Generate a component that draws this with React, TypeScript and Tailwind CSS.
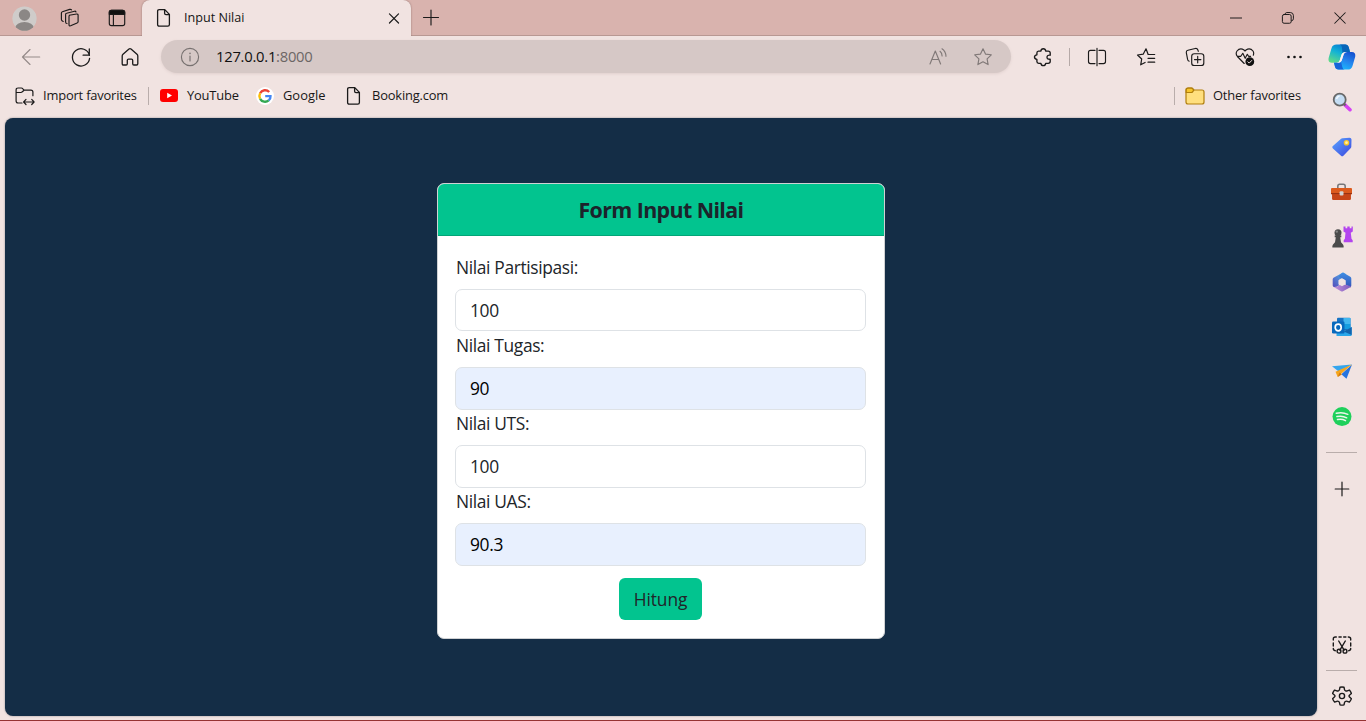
import type { ReactNode } from 'react';

type IconProps = { children: ReactNode; className?: string; color?: string; sw?: number };

function Line({ children, className = 'size-5', color = '#1b1a1a', sw = 1.15 }: IconProps) {
  return (
    <svg viewBox="0 0 20 20" className={`shrink-0 ${className}`} fill="none" stroke={color} strokeWidth={sw} strokeLinecap="round" strokeLinejoin="round">
      {children}
    </svg>
  );
}

function Cell({ children, className = 'w-[49px]' }: { children: ReactNode; className?: string }) {
  return <div className={`flex shrink-0 items-center justify-center ${className}`}>{children}</div>;
}

const PageIcon = () => (
  <Line sw={1.3}>
    <path d="M5.2 1.6h5.6l4.6 4.8v10.2q0 1.6-1.6 1.6H5.2q-1.6 0-1.6-1.6V3.2q0-1.6 1.6-1.6zM10.6 1.8v3.4q0 1.4 1.4 1.4h3.2" />
  </Line>
);

const STAR = 'M10 1.8l2.5 5.3 5.8.7-4.2 4 1 5.8-5.1-2.8-5.1 2.8 1-5.8-4.2-4 5.8-.7z';

function TitleBar() {
  return (
    <header className="flex h-9 shrink-0 items-stretch bg-[#d9b3ae] shadow-[inset_0_-1px_0_#b89893]">
      <div className="flex w-[142px] items-center pl-3">
        <svg viewBox="0 0 25 25" className="size-[25px]">
          <defs><clipPath id="avatar"><circle cx="12.5" cy="12.5" r="12.3" /></clipPath></defs>
          <g clipPath="url(#avatar)">
            <circle cx="12.5" cy="12.5" r="12.3" fill="#cfccca" />
            <circle cx="12.5" cy="9" r="5.7" fill="#8b8785" />
            <ellipse cx="12.5" cy="22" rx="9.3" ry="5.9" fill="#8b8785" />
          </g>
        </svg>
        <Cell className="ml-[8px] w-[49px]">
          <Line>
            <path d="M9.5 6.8l7.4-1.3q1.4-.2 1.5 1.2v7q0 1-1 1.3l-6.5 2.9q-1.5.5-1.6-1V8.2q0-1.1 1-1.4z" transform="translate(-.3 .8) scale(1 .95)" />
            <path d="M7 15.5q-1.4 0-1.4-1.5V6.6q0-1.1 1-1.3l8-2.1q1-.2 1.4.8" />
            <path d="M3.2 13.5Q1.4 13 1.4 11.6V5q0-1 1-1.3l7.3-2.3q1.2-.3 1.8.5" />
          </Line>
        </Cell>
        <Cell className="w-[45px]">
          <Line>
            <rect x="2.3" y="2.3" width="15.4" height="15.4" rx="2.2" />
            <path d="M2.3 6.3V4.5q0-2.2 2.2-2.2h11q2.2 0 2.2 2.2v1.8z" fill="#111" />
            <path d="M6.4 6.5v11" />
          </Line>
        </Cell>
      </div>
      <div className="flex w-[269px] items-center rounded-t-lg bg-[#f1e3e1] pl-3 pr-[10px] shadow-[0_0_2px_#8f6f6b] [clip-path:inset(0_-3px_0_-3px)]">
        <PageIcon />
        <span className="ml-[10px] text-[12.6px] text-[#151515]">Input Nilai</span>
        <Line className="ml-auto size-[14px]" sw={1.7}><path d="M3.5 4.2l13 13M16.500 4.200l-13 13" /></Line>
      </div>
      <Cell className="w-[40px]"><Line><path d="M10 2v15M2.500 9.500h15" /></Line></Cell>
      <div className="ml-auto flex">
        <Cell className="w-[52px]"><Line className="size-[14px]" sw={1.4}><path d="M2 10h16" /></Line></Cell>
        <Cell className="w-[51px]">
          <Line className="size-[14px]" sw={1.4}><rect x="2" y="5" width="12.500" height="12.500" rx="2.400" /><path d="M5.500 4.600q.4-2.200 2.800-2.400h5.200q4 .2 4.200 4v5q-.2 2.600-2.600 3" /></Line>
        </Cell>
        <Cell className="w-[53px]"><Line className="size-[14px]" sw={1.5}><path d="M2.500 2.500l15 15M17.500 2.500l-15 15" /></Line></Cell>
      </div>
    </header>
  );
}

function Toolbar() {
  return (
    <div className="flex h-[41px] shrink-0 items-center pl-1.5">
      <Cell><Line color="#958b89"><path d="M18.7 10H1.5M9 2.5L1.5 10 9 17.5" /></Line></Cell>
      <Cell className="w-[51px]"><Line sw={1.3}><path d="M18.4 8.3a8.6 8.6 0 1 0 .2 3M18.3 2v6.2h-6.2" /></Line></Cell>
      <Cell className="w-[48px]">
        <Line sw={1.3}><path d="M2.2 9q0-1 .8-1.7l6-5.2q1-.9 2 0l6 5.2q.8.7.8 1.700v7.700q0 1.300-1.300 1.300h-2.600q-1.200 0-1.200-1.300v-3.400q0-1.200-1.200-1.200h-3q-1.200 0-1.200 1.200v3.400q0 1.300-1.200 1.300H3.500q-1.300 0-1.300-1.300z" /></Line>
      </Cell>
      <div className="ml-[7px] flex h-[33px] w-[850px] items-center rounded-full bg-[#d6c8c6] pl-[19px] pr-[18px] shadow-[0_1px_3px_#e0d0ce]">
        <Line color="#777170"><circle cx="10" cy="10" r="8.600" /><path d="M10 9v5" /><path d="M10 6.200v.2" strokeWidth="1.500" /></Line>
        <span className="ml-[16px] text-[14.8px] tracking-[-0.26px] text-[#6c6665]"><span className="text-[#0f0f0f]">127.0.0.1</span>:8000</span>
        <Line className="ml-auto size-5" color="#817978"><path d="M2 17L7.300 4 12.600 17M3.900 12.500h6.800M12 4.300q2 1.600 2.100 4.700M14 1.800q3.700 2.500 4 7.500" /></Line>
        <Line className="ml-[25px] size-5" color="#817978"><path d={STAR} /></Line>
      </div>
      <Cell className="ml-2 w-[48px]">
        <Line sw={1.35}><path d="M5.500 4.100h2.300q.3-2.400 2.500-2.400t2.500 2.400h2.400q2 0 2 2v2.100q-3.200-.3-3.200 2t3.200 2v2.300q0 1.800-2 1.800h-2.500q-.3 2.300-2.400 2.300t-2.400-2.300H5.700q-1.800 0-1.800-1.800v-2.100q-2.400-.3-2.400-2.300t2.400-2.300V6q0-1.900 1.600-1.900z" /></Line>
      </Cell>
      <div className="ml-[2px] mr-[2px] h-[18px] w-px bg-[#b5a9a7]" />
      <Cell>
        <Line><path d="M8 3.4H3.500q-2 0-2 2v9.200q0 2 2 2H8M12 3.400h4.500q2 0 2 2v9.200q0 2-2 2H12M10 1.300v17.400" /></Line>
      </Cell>
      <Cell>
        <Line sw={1.2}><path d="M12 7L10 1.800 7.200 7.200l-5.700.8 4.200 4-1 5.800 4.400-2.300M12 7.500h6.700M12 11.300h6.700M12 15.200h6.700" /></Line>
      </Cell>
      <Cell className="w-[50px]">
        <Line><rect x="6.700" y="6.700" width="12.100" height="11.800" rx="2.600" /><path d="M12.700 9.400v6.400M9.500 12.600h6.400M4.200 14.200q-1.300-.4-1.600-1.800L1.300 5.600q-.3-1.900 1.600-2.400l7.300-1.700q2-.4 2.700 1.500l.4 1.300" /></Line>
      </Cell>
      <Cell>
        <Line><path d="M9.200 16.500L2.400 9.500q-2.200-2.800-.4-5.500Q5 .4 9 3l1 1 1-1q4-2.600 7 1 1.200 2 .3 4.200M2.300 9.300h3.500l2-3 2.400 5 2.100-4 1.300 2h2" /><circle cx="14.800" cy="14.700" r="4.400" fill="#111" stroke="none" /><path d="M12.900 14.800l1.300 1.300 2.500-2.600" stroke="#f1e3e1" strokeWidth="1" /></Line>
      </Cell>
      <Cell><Line><g fill="#111" stroke="none"><circle cx="4.500" cy="10" r="1.300" /><circle cx="10.500" cy="10" r="1.300" /><circle cx="16.500" cy="10" r="1.300" /></g></Line></Cell>
    </div>
  );
}

function Bookmarks() {
  return (
    <div className="flex h-[37px] shrink-0 items-center pl-[15px] text-[12.9px] tracking-[-0.18px] text-[#181717]">
      <Line sw={1.2}>
        <path d="M7 17H3.100q-2 0-2-2V4q0-2 2-2h3.200q1 0 1.600.8l1.200 1.300h6.800q2 0 2 2v3.600M1.200 6.500h4.600q1 0 1.600-.8L9 4.200M9 16h9.500M11 13.400L8.600 16l2.400 2.500M16.700 13.400l2.400 2.600-2.400 2.500" />
      </Line>
      <span className="ml-2 w-[95px] whitespace-nowrap">Import favorites</span>
      <div className="ml-[10px] h-[18px] w-px bg-[#b9adab]" />
      <svg viewBox="0 0 18 13" className="ml-[11px] h-[13px] w-[18px]"><rect width="18" height="13" rx="3" fill="#f00" /><path d="M7.200 3.800v5.400L12 6.500z" fill="#fff" /></svg>
      <span className="ml-[9px] w-[53px] whitespace-nowrap">YouTube</span>
      <svg viewBox="0 0 18 18" className="ml-4 size-[18px]">
        <circle cx="9" cy="9" r="9" fill="#fff" />
        <g fill="none" strokeWidth="2.400">
          <path d="M13.200 5A5.600 5.600 0 0 0 4.100 6.300" stroke="#ea4335" />
          <path d="M4.100 6.300a5.800 5.800 0 0 0 0 5.500" stroke="#fbbc05" />
          <path d="M4.100 11.800a5.600 5.600 0 0 0 8.600 1.500" stroke="#34a853" />
          <path d="M12.700 13.300q2-1.700 1.800-4.200H9.200" stroke="#4285f4" />
        </g>
      </svg>
      <span className="ml-[9px] w-[44px] whitespace-nowrap tracking-normal">Google</span>
      <div className="ml-[17px]"><PageIcon /></div>
      <span className="ml-2 whitespace-nowrap">Booking.com</span>
      <div className="ml-auto h-[18px] w-px bg-[#b9adab]" />
      <svg viewBox="0 0 20 18" className="ml-[10px] h-[18px] w-5" stroke="#b17f0d" strokeWidth="1.200">
        <path d="M1 7V3q0-2 2-2h3.500q1 0 1.500.8L9 3h8q2 0 2 2v10q0 2-2 2H3q-2 0-2-2z" fill="#ffdf7e" />
        <path d="M1.200 5.500V3q0-1.800 2-1.800h3.200q1 0 1.400.7l.9 1.300L7.500 5q-.5.5-1.400.5z" fill="#f7c52c" />
      </svg>
      <span className="ml-2 w-[105px] whitespace-nowrap">Other favorites</span>
    </div>
  );
}

const fields = [
  { label: 'Nilai Partisipasi:', value: '100', filled: false },
  { label: 'Nilai Tugas:', value: '90', filled: true },
  { label: 'Nilai UTS:', value: '100', filled: false },
  { label: 'Nilai UAS:', value: '90.3', filled: true },
];

function GradeForm() {
  return (
    <form className="flex h-[456px] w-[448px] flex-col overflow-hidden rounded-[7px] border border-[#cfd1d3] bg-white text-[17.4px] tracking-[-0.36px] text-[#212529]" onSubmit={(e) => e.preventDefault()}>
      <h1 className="flex h-[52px] shrink-0 items-center justify-center border-b border-[#02a577] bg-[#02c48f] pt-[2px] text-[21.4px] font-bold tracking-[-0.6px] text-[#1c232b]">Form Input Nilai</h1>
      <div className="flex flex-col pl-[17px] pr-[18px] pt-[17.6px]">
        {fields.map((f) => (
          <label key={f.label} className="flex h-[78.1px] flex-col">
            <span className="h-[35.3px] pl-px leading-[26.4px]">{f.label}</span>
            <input
              defaultValue={f.value}
              className={`h-[42.6px] rounded-[7px] border border-[#dee2e6] px-3.5 outline-none ${f.filled ? 'bg-[#e8f0fe] text-black' : 'bg-white'}`}
            />
          </label>
        ))}
        <button className="mt-3 h-[42px] w-[83px] self-center rounded-[6px] bg-[#02c48f] pt-px tracking-[-0.1px]">Hitung</button>
      </div>
    </form>
  );
}

function Copilot() {
  return (
    <svg viewBox="0 0 28 26" className="h-[26px] w-7">
      <defs>
        <linearGradient id="cpA" x1=".7" y1="0" x2=".2" y2="1"><stop offset="0" stopColor="#0876d2" /><stop offset=".45" stopColor="#12b2d6" /><stop offset="1" stopColor="#62dc85" /></linearGradient>
        <linearGradient id="cpB" x1=".8" y1="0" x2=".3" y2="1"><stop offset="0" stopColor="#1450cf" /><stop offset=".5" stopColor="#2484ed" /><stop offset="1" stopColor="#1bbcff" /></linearGradient>
      </defs>
      <path d="M8.500.5h8.700q2.800 0 3.600 3L22 8h-5q-2.500 0-3.400 2.600L11.700 16.500q-.8 2.300-3.200 2.300H4q-4.400 0-3.300-5L3.500 4.200Q4.500.5 8.500.5z" fill="url(#cpA)" />
      <path d="M17.200.5q2.800 0 3.600 3L22 8h-4.500q-2 0-3 1.300L13.900 3q-.5-2.500-2.400-2.500z" fill="#0764b8" />
      <path d="M19.500 25.500h-9q-2.800 0-3.500-2.700l-1-4h4.500q2.400 0 3.200-2.300l2-6.300Q16.500 8 19 8h4.700q4.300 0 3.500 4.700l-2.700 9.200q-1 3.600-5 3.600z" fill="url(#cpB)" />
      <path d="M10.500 25.500q-2.800 0-3.500-2.700l-1-4h4.500q1.500 0 2.500-1.200l1.300 5.400q.6 2.500 2.400 2.500z" fill="#1665d8" />
      <path d="M19 8h-2q-2.500 0-3.400 2.600L11.700 16.500q-.8 2.300-3.200 2.300h2q2.400 0 3.200-2.300l2-6.300Q16.500 8 19 8z" fill="#fbf3f2" />
    </svg>
  );
}

function Sidebar() {
  return (
    <aside className="flex w-12 shrink-0 flex-col items-center pr-px">
      <Cell className="mt-[8px] h-[26px] w-[47px]"><Copilot /></Cell>
      <div className="mt-[9px] flex flex-col items-center">
        <Cell className="h-[45px] w-[47px]">
          <svg viewBox="0 0 20 20" className="size-5"><path d="M12 12l6 5.700" stroke="#d743f4" strokeWidth="3.600" strokeLinecap="round" /><path d="M11.500 11.500l2 2" stroke="#666" strokeWidth="2" /><circle cx="7.700" cy="7.700" r="6" fill="#c4ddf3" stroke="#686868" strokeWidth="1.800" /><path d="M4.500 7q.6-2.600 3-3" stroke="#f4faff" strokeWidth="1.500" fill="none" /></svg>
        </Cell>
        <Cell className="h-[45px] w-[47px]">
          <svg viewBox="0 0 20 20" className="size-5">
            <defs><linearGradient id="tag" x1="0" y1="0" x2="1" y2="1"><stop stopColor="#5ba6ff" /><stop offset="1" stopColor="#3c46dd" /></linearGradient></defs>
            <path d="M10.500 1.200L17.600.7q1.800 0 1.900 1.900l-.2 7.100q0 .9-.7 1.600l-7.200 7.400q-1.200 1.100-2.400 0L.9 11.500q-1.200-1.200 0-2.400l7.900-7.200q.7-.7 1.700-.7z" fill="url(#tag)" /><circle cx="14.500" cy="5.700" r="2.100" fill="#fff0a8" stroke="#f6c52b" strokeWidth="1.400" />
          </svg>
        </Cell>
        <Cell className="h-[45px] w-[47px] pt-[2px]">
          <svg viewBox="0 0 20 20" className="size-[21px]"><path d="M6.500 6V4q0-1.800 1.800-1.800h3.400q1.800 0 1.800 1.800v2" fill="none" stroke="#77777a" strokeWidth="1.500" /><rect y="5.700" width="20" height="6.200" rx="1" fill="#dc5a1d" /><path d="M1 11h18v5q0 1.200-1.200 1.200H2.200Q1 17.200 1 16z" fill="#c64518" /><path d="M0 11h20" stroke="#8a2b11" strokeWidth=".8" /><rect x="8.200" y="8.800" width="3.700" height="4" rx="1" fill="#d2d2d2" /></svg>
        </Cell>
        <Cell className="h-[45px] w-[47px]">
          <svg viewBox="0 0 22 22" className="size-[22px]"><path d="M12.500.5h2v1.700h1.800V.5h2.400v1.700h1.800V.5h1.300v5l-2 1.300.7 6 1.200 1.500v2h-9v-2l1.200-1.500.6-6-2-1.300z" fill="#b344ee" /><g fill="#4b4b4b"><circle cx="7" cy="6.700" r="3.500" /><path d="M3.700 9.500h6.600v1.700H9.200l.8 5 2 2.300q1 1.300.6 3H1.400q-.4-1.700.6-3l2-2.300.8-5H3.700z" /></g><circle cx="5.800" cy="5.600" r="1.200" fill="#858585" /></svg>
        </Cell>
        <Cell className="h-[45px] w-[47px]">
          <svg viewBox="0 0 20 20" className="size-5">
            <defs>
              <linearGradient id="mA" x1="0" y1="1" x2="1" y2="0"><stop stopColor="#554cba" /><stop offset="1" stopColor="#50bdf0" /></linearGradient>
              <linearGradient id="mB"><stop stopColor="#c896dc" /><stop offset="1" stopColor="#7d5abf" /></linearGradient>
              <linearGradient id="mC" x1="0" y1="0" x2="0" y2="1"><stop stopColor="#3f8ee4" /><stop offset="1" stopColor="#3454b8" /></linearGradient>
            </defs>
            <path d="M11 .4L1.500 5.700Q.7 6.200.7 7.200v6.300q0 1.500 1.700 1.600 2.500 0 4.500-1.500V8L14 4V2z" fill="url(#mA)" />
            <path d="M11 .4l7.300 4.300q1 .6 1 1.700v7.200q0 1.200-1 1.800l-4.800-3V8.500L7 5q0-3 4-4.600z" fill="url(#mC)" />
            <path d="M1.200 14.700q3.200.8 5.700-1.300l2.800-1.700 9.300 2.500q-.2.800-.7 1.100L11 19.300q-1 .6-2 0z" fill="url(#mB)" />
            <path d="M10 6.200l3.500 2v4L10 14.200l-3.500-2v-4z" fill="#f1e3e1" />
          </svg>
        </Cell>
        <Cell className="h-[45px] w-[47px]">
          <svg viewBox="0 0 20 20" className="size-5"><rect x="5" y=".8" width="13.500" height="13" rx="1" fill="#1673c4" /><path d="M11.500 1h7v6h-7z" fill="#42b7ef" /><path d="M12 7h6.500v5H12z" fill="#159de0" /><path d="M4.500 19V10l7.500 4.500L19.700 10v8q0 1-1 1z" fill="#29a7ea" /><path d="M19.700 10v8l-8-3.600z" fill="#1265ae" /><rect y="4.500" width="12.500" height="12" rx="1.200" fill="#0869bd" /><ellipse cx="6.200" cy="10.500" rx="3" ry="3.300" fill="none" stroke="#fff" strokeWidth="1.700" /></svg>
        </Cell>
        <Cell className="h-[45px] w-[47px]">
          <svg viewBox="0 0 20 20" className="size-5"><path d="M0 4.200L20 2.500 6.700 9.600z" fill="#35a5ed" /><path d="M20 2.500L14.500 16.800l-5.200-4.600z" fill="#2674df" /><path d="M20 2.500L3.500 9.800l2.200 5.200 3.500-3.200z" fill="#f6a51c" /><path d="M5.700 15l1.900-4.500 2.300 2z" fill="#d47a0c" /></svg>
        </Cell>
        <Cell className="h-[45px] w-[47px]">
          <svg viewBox="0 0 20 20" className="size-5"><circle cx="10" cy="9.600" r="9.500" fill="#1ed05b" /><path d="M4.300 6.300q6-1.700 11.500 1M4.900 9.600q5.300-1.300 9.800 1.200M5.500 12.600q4.300-1 8 1" fill="none" stroke="#eaf6ea" strokeWidth="1.500" strokeLinecap="round" /></svg>
        </Cell>
      </div>
      <div className="mt-[13px] h-px w-[31px] bg-[#b9adab]" />
      <Cell className="mt-[26px] h-5 w-[47px]"><Line className="size-4" sw={1.5}><path d="M10 1.500v17M1.500 10h17" /></Line></Cell>
      <Cell className="mt-auto h-5 w-[47px]">
        <Line sw={1.4}>
          <path d="M1.300 5V4q0-2 2-2h1M7 2h2.200M11.700 2h2.200M16.300 2q2.400 0 2.400 2v1M1.300 8v3M18.700 8v3M1.300 13.500q0 2 2 2.200M18.700 13.500q0 2-2 2.200" />
          <path d="M6.700 6l5.400 9.200M13.300 6l-5.400 9.200" /><circle cx="7" cy="16.200" r="1.900" /><circle cx="13" cy="16.200" r="1.900" />
        </Line>
      </Cell>
      <div className="mt-[15px] h-px w-[31px] bg-[#b9adab]" />
      <Cell className="mb-[14px] mt-[15px] h-5 w-[47px]">
        <Line sw={1.4}>
          <path d="M8 1.200q2-.5 4 0l.5 2.400q.2.900 1.100 1.200.8.400 1.600.1l2.200-.8q1.400 1.500 2 3.400l-1.800 1.600q-1.200 1 0 2l1.800 1.600q-.6 1.900-2 3.400l-2.200-.8q-.8-.3-1.600.1-.9.400-1.100 1.200l-.5 2.300q-2 .5-4 0l-.5-2.300q-.2-.8-1.100-1.200-.8-.4-1.600-.1l-2.200.8q-1.400-1.500-2-3.400L2.400 11q1.200-1 0-2L.6 7.500q.6-1.900 2-3.400l2.200.8q.8.300 1.600-.1.900-.3 1.100-1.200z" /><circle cx="10" cy="10" r="2.600" />
        </Line>
      </Cell>
    </aside>
  );
}

export default function App() {
  return (
    <div className="flex h-[721px] w-[1366px] flex-col overflow-hidden border-b border-[#963333] bg-[#f1e3e1] font-['Open_Sans','Noto_Sans',sans-serif]">
      <TitleBar />
      <div className="flex min-h-0 flex-1">
        <div className="flex min-w-0 flex-1 flex-col">
          <Toolbar />
          <Bookmarks />
          <main className="mb-1 ml-[5px] mr-px mt-[4px] flex flex-1 items-start justify-center rounded-lg bg-[#142d46] pt-[65px] shadow-[0_0_2px_#8a8588]">
            <GradeForm />
          </main>
        </div>
        <Sidebar />
      </div>
    </div>
  );
}
